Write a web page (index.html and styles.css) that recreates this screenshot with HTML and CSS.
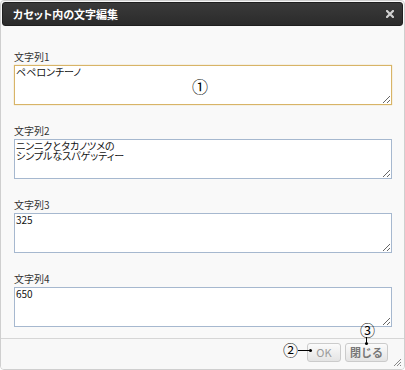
FILE: index.html
```html
<!DOCTYPE html>
<html lang="ja">
<head>
<meta charset="utf-8">
<link rel="stylesheet" href="styles.css">
</head>
<body>
<div class="dialog">
  <div class="titlebar">
    <span class="title">カセット内の文字編集</span>
    <svg class="close" width="8" height="8" viewBox="0 0 8 8"><path d="M1 1L7 7M7 1L1 7" stroke="#d0d0d0" stroke-width="2.2" stroke-linecap="square"/></svg>
  </div>
  <div class="content">
    <div class="field"><label class="label">文字列1</label><textarea class="input focus">ペペロンチーノ</textarea></div>
    <div class="field"><label class="label">文字列2</label><textarea class="input">ニンニクとタカノツメの
シンプルなスパゲッティー</textarea></div>
    <div class="field"><label class="label">文字列3</label><textarea class="input">325</textarea></div>
    <div class="field"><label class="label">文字列4</label><textarea class="input">650</textarea></div>
  </div>
  <div class="footer">
    <button class="btn btn-ok">OK</button>
    <button class="btn btn-close">閉じる</button>
  </div>
  <svg class="grip" width="9" height="9" viewBox="0 0 9 9"><path d="M8 1L1 8M8 4L4 8M8 7L7 8" stroke="#888" stroke-width="1"/></svg>
  <span class="mark mark1">①</span>
  <span class="mark mark2">②</span>
  <span class="mark mark3">③</span>
  <span class="line line2"></span>
  <span class="line line3"></span>
  <span class="dot dot2"></span>
  <span class="dot dot3"></span>
</div>
</body>
</html>
```

FILE: styles.css
```css
html, body {
  margin: 0;
  padding: 0;
  background: #ffffff;
}
body {
  font-family: "Noto Sans CJK JP", "Liberation Sans", sans-serif;
  font-feature-settings: "palt";
}
.dialog {
  position: relative;
  width: 405px;
  height: 370px;
  box-sizing: border-box;
  border: 1px solid #cfcfcf;
  border-radius: 4px;
  background: #f8f8f8;
  display: flex;
  flex-direction: column;
  overflow: hidden;
}
.titlebar {
  flex-shrink: 0;
  margin: 1px;
  height: 24px;
  box-sizing: border-box;
  border: 1px solid #1f1f1f;
  border-radius: 3px;
  background: linear-gradient(#3a3a3a, #2b2b2b);
  display: flex;
  align-items: center;
  justify-content: space-between;
  padding: 0 8px 0 10px;
}
.title {
  color: #ffffff;
  font-size: 11px;
  font-weight: bold;
  line-height: 14px;
  font-feature-settings: "palt";
}
.close {
  display: block;
}
.content {
  flex: 1;
  min-height: 0;
  padding: 23px 12px 0 13px;
  background: #f9f9f9;
  display: flex;
  flex-direction: column;
  gap: 19px;
}
.field {
  display: flex;
  flex-direction: column;
  flex-shrink: 0;
}
.label {
  font-size: 10px;
  line-height: 14px;
  color: #333333;
  margin-bottom: 1px;
}
.input {
  display: block;
  flex-shrink: 0;
  width: 100%;
  height: 40px;
  box-sizing: border-box;
  margin: 0;
  border: 1px solid #a6b8cf;
  border-radius: 0;
  padding: 1px 0 0 1px;
  font-family: "Noto Sans CJK JP", sans-serif;
  font-feature-settings: "palt";
  font-size: 10px;
  line-height: 10px;
  color: #111111;
  background: #ffffff;
  outline: none;
}
.input.focus {
  border-color: #d8b467;
  box-shadow: 0 0 1px #e2c27e;
}
.footer {
  flex-shrink: 0;
  height: 31px;
  box-sizing: border-box;
  border-top: 1px solid #d6d6d6;
  display: flex;
  justify-content: flex-end;
  align-items: flex-start;
  gap: 4px;
  padding: 4px 16px 0 0;
  background: #f8f8f8;
}
.btn {
  height: 19px;
  box-sizing: border-box;
  border: 1px solid #cbcbcb;
  border-radius: 3px;
  background: linear-gradient(#fbfbfb, #e4e4e4);
  font-family: "Noto Sans CJK JP", sans-serif;
  font-size: 11px;
  line-height: 15px;
  padding: 0;
  margin: 0;
}
.btn-ok {
  width: 34px;
  color: #9a9a9a;
}
.btn-close {
  width: 43px;
  color: #777777;
  font-weight: bold;
}
.grip {
  position: absolute;
  right: 2px;
  bottom: 2px;
}
.mark {
  position: absolute;
  font-family: "Noto Sans CJK JP", sans-serif;
  font-size: 16px;
  line-height: 16px;
  color: #000000;
}
.mark1 { left: 191px; top: 77px; }
.mark2 { left: 282px; top: 341px; font-size: 15px; }
.mark3 { left: 359px; top: 321px; font-size: 15px; }
.line {
  position: absolute;
  background: #000000;
}
.line2 { left: 297px; top: 349px; width: 12px; height: 1px; }
.line3 { left: 365px; top: 336px; width: 1px; height: 6px; }
.dot {
  position: absolute;
  width: 3px;
  height: 3px;
  border-radius: 50%;
  background: #000000;
}
.dot2 { left: 308px; top: 348px; }
.dot3 { left: 364px; top: 341px; }
```
